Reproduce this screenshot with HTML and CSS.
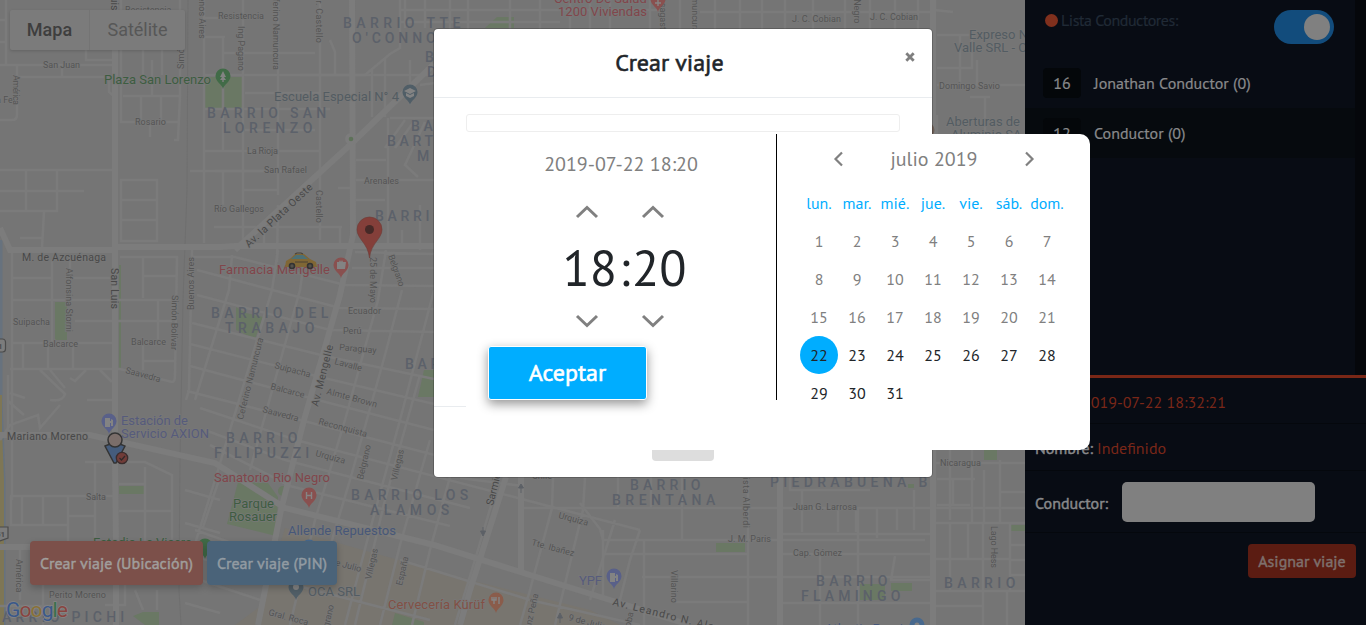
FILE: index.html
```html
<!DOCTYPE html>
<html lang="es">
<head>
<meta charset="utf-8">
<title>Crear viaje</title>
<link rel="stylesheet" href="styles.css">
</head>
<body>
<div class="app">
<main class="map">
<svg class="map-canvas" width="1025" height="625" viewBox="0 0 1025 625">
  <!-- commercial blocks and parks -->
  <path class="shop" d="M285 528L345 545L470 580L590 610L620 625L235 625L262 605Z"/>
  <g class="park">
    <path d="M205 77H242V108H205Z"/><path d="M55 302H67V340H55Z"/><path d="M119 265H121V368H119Z"/>
    <path d="M236 307L246 313L263 317L255 339L236 330Z"/><path d="M424 370H434V397H418Z"/><path d="M119 486H144V494H119Z"/>
    <path d="M238 482L268 483L278 497L276 536L227 524Z"/><circle cx="283" cy="491" r="5"/><path d="M280 501H286L283 509Z"/>
    <path d="M133 616L143 612H159V625H145Z"/><path d="M395 613L424 622V625H392Z"/><path d="M485 28L497 17H514V28Z"/>
    <path d="M716 543H745V552H716Z"/><path d="M984 450H997V460H984Z"/><path d="M1010 525H1025V531H1010Z"/><path d="M860 584H885V600H860Z"/><path d="M891 583H912V591H891Z"/><path d="M908 484H914V488H908Z"/>
  </g>
  <path class="river" d="M1 240V400L4 480V625"/><path class="route" d="M0 395V430L2 480V625"/>
  <path class="rail" d="M188 0L187 190L183 300L180 460L179 590L181 625"/>
  <!-- streets, left side -->
  <path class="road" d="M6 0V65M0 20H5M0 42H5M86 50V60H112M0 65H112M17 77H109V92L115 97M17 65V115Q17 120 12 120H0M62 65V77M121 0V122H178M123 96H180M141 97V122M161 97V122M152 60V95M143 50V75M162 50V75M180 0V95L178 140H174M150 122V137M0 170H115M26 170V210M57 170V211H0M0 191H84M121 180H157V241H121ZM121 200H157M121 220H157M44 212L42 248M20 238H42M204 0V243M204 18H220M204 37H225M204 75H435M204 109H330M204 151H320M190 171H290M12 250V500M12 278H52M70 278H110M52 260V345M12 300H178M75 321H172M70 260V300M12 343H115M23 343V368M48 343V368M73 343V368M10 369H120L172 382Q175 382 175 375L177 257H120M143 276H177M143 258V298M158 300V340M143 361H174M143 345V370M192 250L189 390L186 400M40 370L65 394Q63 402 50 400M50 370L65 388M70 378L75 381L86 370M100 370L112 382M87 400H115M8 375V430L20 440M10 393L25 398M8 401L24 415"/>
  <path class="road" d="M85 462H145L172 475V545M145 467V545M95 462V545M10 496H115M11 496V525H68M22 496V524M43 496V524M68 496V545M68 516H95M119 484H145M119 511H172M20 548V600M43 585V625M105 605H125V585M135 590L143 610M157 590V610M185 603L220 613M186 572L203 576M185 490L220 500M185 523L220 533M219 480L203 527M0 606H50M0 440L10 425L38 415L40 428L60 405"/>
  <!-- streets, upper centre -->
  <path class="road" d="M223 37V150M243 0V245M278 0V195M320 0V240M223 53H315M245 93H320M245 130H315M215 171H290M223 171V205M244 190H277M278 227H342M330 40L335 52V75M300 75H365L390 54L400 48V0M372 70V117M385 58V117M390 118H435M388 118V246M356 160H386M356 180H434M338 188H354M356 200H385M410 60V105M420 85L435 83M405 120L385 148M415 120L395 148M425 122L405 165L418 177M264 227V246M278 205L277 262M214 227H340V246M402 230V246M420 205V250M405 0V28M425 0V28M450 0V29M468 0V29M510 0V29M540 0V29M570 0V29M590 0V29M610 0V29M400 10H660M400 22H560M650 0V29M680 0V29M700 12H930M715 0V29M740 0V29M762 0V29M785 0V29M813 0V29M845 0V29M870 0V29M895 0V29M918 0V29"/>
  <!-- slanted grid -->
  <path class="road" d="M192 257H235L345 285L434 286M197 270L340 308L434 309M197 295L330 330L434 332M192 323L325 356L434 379M190 344L320 377L434 404M190 366L310 398L434 430M187 391L304 421L450 459M200 408L296 440L640 530M205 430L285 460L470 508M210 445L290 486L450 526M352 268H434M355 252L434 254M278 250L272 290L215 480L190 560M304 262L300 290L250 470M232 255L229 290L195 400M386 250L378 300L345 420L315 520L290 625M402 290L385 355L350 480L320 580M434 290L400 420L370 530L345 625M420 375L385 500L355 625M430 440L400 545L380 625M460 440L430 550L412 625M500 475L475 560L455 625M553 478L552 508L530 590L520 625M585 478L583 510L555 625M615 520L590 600M640 530L630 560L620 600M195 530L280 560M190 555L275 580L430 620M185 575L260 600M460 478L523 486M520 508H1025M400 560L530 600L640 625"/>
  <!-- streets, right -->
  <path class="road" d="M618 477V508M651 477V508M682 477V540M603 530V598M580 503L600 529L603 540M604 540H925M644 540V625M748 477V625M603 554H748M642 577H935M676 602H748M802 508V532M838 508V532M858 508V625M877 508V538M897 508V530M914 490V530M780 534H932M780 554H935M790 477V490H870M802 490V508M856 508V532M820 554V625M895 556L891 580H930M780 603H930M935 450V520M950 450V520M935 463H1025M937 479H975M953 480V504M937 505H970M972 450V522M984 470V522M1000 460V522M1000 492H1025M935 523H1025M950 524V590M968 524V558M983 524V590M1010 524V590M935 559H1010M1010 560H1025M1010 575H1025M935 591H1025M935 606H983M983 591V625M1007 591V625M1010 545H1025M935 0V10L953 12M937 35H972V68H937M960 35V82M977 60V86M937 85H1025M937 115V134M985 98V134M970 97H990"/>
  <path class="avenue" d="M115 0V460L116 545V625M0 228L10 250H115M118 247H220L235 246H434M434 64L350 145L235 250M352 0L353 235L340 295L304 420L281 510L258 625M0 435H90L215 463L285 508L434 545L610 600L690 625M0 547H35M780 477V625M933 0V625M521 477V570M506 477L470 590L460 625"/>
  <circle class="junction" cx="351" cy="139" r="6"/><circle class="park-dot" cx="351" cy="139" r="2.3"/>
  <!-- street names -->
  <g class="st">
    <text x="43" y="68" textLength="37">San Juan</text><text x="-4" y="103">a Fe</text><text transform="translate(13 75) rotate(90)" textLength="30">América</text><text x="135" y="125" textLength="31">Rosario</text><text transform="translate(184 69) rotate(-90)">Simón Bolívar</text><text transform="translate(199 -14) rotate(90)">Buenos Aires</text><text x="125" y="13">Resistencia</text><text x="218" y="19" textLength="46">Resistencia</text><text transform="translate(238 26) rotate(90)" textLength="45">Ing Pagano</text><text transform="translate(273 -12) rotate(90)" textLength="82">Ceferino Namuncura</text><text transform="translate(316 -6) rotate(90)" textLength="49">Dr. Castello</text><text x="247" y="154" textLength="31">La Rioja</text><text x="264" y="173" textLength="43">San Rafael</text><text x="364" y="184" textLength="35">Arenales</text><text x="214" y="212" textLength="50">Río Gallegos</text><text transform="translate(316 190) rotate(90)" textLength="33">Castello</text>
    <text x="13" y="325" textLength="37">Suipacha</text><text x="43" y="347" textLength="35">Balcarce</text><text x="131" y="345" textLength="35">Balcarce</text><text transform="translate(66 268) rotate(90)" textLength="64">Alfonsina Storni</text><text transform="translate(172 295) rotate(91)" textLength="55">Simón Bolívar</text><text transform="translate(194 310) rotate(-90)" textLength="53">Buenos Aires</text><text transform="translate(125 373) rotate(15)" textLength="36">Saavedra</text><text x="348" y="314" textLength="33">Ecuador</text><text x="343" y="334">Perú</text><text transform="translate(339 350) rotate(5)">Paraguay</text><text transform="translate(334 364) rotate(15)">Lavalle</text><text transform="translate(274 368) rotate(15)">Suipacha</text><text transform="translate(270 389) rotate(15)">Balcarce</text><text transform="translate(326 394) rotate(15)" textLength="52">Almte Brown</text><text transform="translate(262 412) rotate(15)">Saavedra</text><text transform="translate(243 420) rotate(-76)" textLength="84">Ceferino Namuncura</text><text transform="translate(370 257) rotate(90)" textLength="46">25 de Mayo</text><text transform="translate(388 256) rotate(70)" textLength="33">Belgrano</text>
    <text x="86" y="500" textLength="20">Salta</text><text transform="translate(16 559) rotate(90)">América</text><text x="49" y="598" textLength="57">Perito Moreno</text><text transform="translate(318 424) rotate(15)" textLength="50">Reconquista</text><text transform="translate(315 456) rotate(15)">Urquiza</text><text transform="translate(363 480) rotate(-77)">Belgrano</text><text transform="translate(397 481) rotate(-77)">Villegas</text><text transform="translate(371 580) rotate(-77)">Villegas</text><text transform="translate(402 586) rotate(-77)">España</text><text transform="translate(323 562) rotate(15)">9 de Julio</text><text transform="translate(268 615) rotate(15)" textLength="41">Gral. Roca</text><text transform="translate(326 640) rotate(-77)">Belgrano</text><text transform="translate(558 518) rotate(15)">Urquiza</text><text transform="translate(531 545) rotate(15)" textLength="44">Tte. Ibañez</text><text transform="translate(528 640) rotate(-77)">Saenz Peña</text><text transform="translate(671 570) rotate(90)" textLength="33">Villarino</text><text transform="translate(626 646) rotate(-77)">Córdoba</text><text x="532" y="479">Chile</text><text x="728" y="542" textLength="43">J. M. Paris</text><text x="793" y="510" textLength="64">Juan G. Larrosa</text><text x="793" y="556" textLength="49">Cap. Gómez</text><text x="940" y="466" textLength="41">Nicaragua</text><text transform="translate(743 457) rotate(90)" textLength="71">Bautista Alberdi</text><text transform="translate(991 526) rotate(90)" textLength="42">Lago Hess</text><text x="792" y="22" textLength="49">J. C. Cobian</text><text x="870" y="20" textLength="48">J. C. Cobian</text><text transform="translate(854 -16) rotate(90)">Río Negro</text><text transform="translate(660 -13) rotate(90)">Anasagasti</text><text transform="translate(692 -14) rotate(90)">Namuncura</text><text x="939" y="89" textLength="61">Domingo Savio</text><text transform="translate(568 620) rotate(15)">9 de Julio</text>
  </g>
  <g class="ave">
    <text transform="translate(111 -29) rotate(90)">San Luis</text><text x="22" y="261" textLength="84">M. de Azcuénaga</text><text transform="translate(111 268) rotate(90)" textLength="41">San Luis</text><text transform="translate(249 248) rotate(-43)" textLength="88">Av. la Plata Oeste</text><text transform="translate(318 407) rotate(-76)" textLength="63">Av. Mengelle</text><text x="7" y="440" textLength="81">Mariano Moreno</text><text transform="translate(493 506) rotate(-76)">Sarmiento</text><text transform="translate(612 605) rotate(14)" textLength="114">Av. Leandro N. Alem</text>
  </g>
  <g class="hood">
    <text x="207" y="118" textLength="123">BARRIO SAN</text><text x="223" y="133" textLength="93">LORENZO</text><text x="343" y="28" textLength="121">BARRIO TTE</text><text x="352" y="43" textLength="100">O'CONNOR</text><text x="425" y="62">BARRIO</text><text x="427" y="77">DON</text><text x="411" y="131">BARRIO</text><text x="387" y="146">BARTOLOME</text><text x="417" y="161">MITRE</text><text x="375" y="221">BARRIO</text><text x="211" y="318" textLength="121">BARRIO DEL</text><text x="225" y="333" textLength="93">TRABAJO</text><text x="405" y="369">BARRIO</text><text x="226" y="443" textLength="75">BARRIO</text><text x="214" y="458" textLength="99">FILIPUZZI</text><text x="351" y="500" textLength="121">BARRIO LOS</text><text x="370" y="515" textLength="83">ALAMOS</text><text x="630" y="490" textLength="74">BARRIO</text><text x="612" y="505" textLength="107">BRENTANA</text><text x="770" y="487" textLength="161">PIEDRABUENA B</text><text x="816" y="586" textLength="75">BARRIO</text><text x="801" y="601" textLength="103">FLAMINGO</text><text x="944" y="588" textLength="75">BARRIO</text><text x="2" y="622" textLength="126">ARRIO PICHI</text>
  </g>
  <!-- points of interest -->
  <g class="poi">
    <text class="green" x="104" y="84" textLength="107">Plaza San Lorenzo</text><text class="teal" x="274" y="101" textLength="125">Escuela Especial N° 4</text><text class="red" x="219" y="274" textLength="111">Farmacia Mengelle</text><text class="blue" x="121" y="425" textLength="67">Estación de</text><text class="blue" x="121" y="438" textLength="88">Servicio AXION</text><text class="red" x="214" y="482" textLength="116">Sanatorio Rio Negro</text><text class="green" x="233" y="508" textLength="41">Parque</text><text class="green" x="229" y="521" textLength="48">Rosauer</text><text class="sky" x="288" y="535" textLength="108">Allende Repuestos</text><text class="teal" x="308" y="596" textLength="52">OCA SRL</text><text class="orange" x="388" y="609" textLength="97">Cervecería Kürüf</text><text class="blue" x="579" y="585" textLength="23">YPF</text><text class="green" x="93" y="547" textLength="99">Estadio La Visera</text><text class="red" x="554" y="3">Centro De Salud</text><text class="red" x="558" y="16" textLength="89">1200 Viviendas</text><text class="teal" x="969" y="39">Expreso Norte</text><text class="teal" x="954" y="52">Valle SRL - Of.</text><text class="teal" x="946" y="126" textLength="74">Aberturas de</text><text class="teal" x="951" y="139">Aluminio SA</text><text class="sky" x="825" y="633">Atlantic Propi</text>
  </g>
  <defs><path id="pin" d="M0 12C-1 7-7.5 5-7.5-1A7.5 7.5 0 1 1 7.5-1C7.5 5 1 7 0 12Z"/></defs>
  <g><use href="#pin" class="pin-green" x="223" y="77"/><path class="glyph" d="M223 71L220 77H222L220 80H222.3V82H223.7V80H226L224 77H226Z"/></g>
  <g><use href="#pin" class="pin-teal" x="410" y="93"/><path class="glyph" d="M404 91L410 88L416 91L410 94ZM406 93L410 95L414 93V96L410 98L406 96Z"/></g>
  <g><use href="#pin" class="pin-red" x="341" y="266"/><path class="glyph" d="M337 262H339L340 260L341 262L342 260L343 262H346L345 269H337Z"/></g>
  <g><use href="#pin" class="pin-blue" x="109" y="422"/><path class="glyph" d="M105 418H110V421H111V419L113 420V426H111V423H110V427H105Z"/></g>
  <g><use href="#pin" class="pin-red" x="309" y="496"/><path class="glyph-line" d="M306.5 492V499M311.5 492V499M306.5 495.5H311.5"/></g>
  <g><use href="#pin" class="pin-teal" x="296" y="588"/><circle class="glyph" cx="296" cy="587" r="3"/></g>
  <g><use href="#pin" class="pin-orange" x="496" y="601"/><path class="glyph-line" d="M494 597V604M492 597V600H496V597M499 597V604"/></g>
  <g><use href="#pin" class="pin-blue" x="614" y="577"/><path class="glyph" d="M610 573H615V576H616V574L618 575V581H616V578H615V582H610Z"/></g>
  <g><use href="#pin" class="pin-red" x="658" y="0"/><path class="glyph-line" d="M658 -1V6M655 3H661"/></g>
  <g><use href="#pin" class="pin-green" x="205" y="547"/><use href="#pin" class="pin-sky" x="309" y="548"/><use href="#pin" class="pin-sky" x="917" y="626"/><circle class="glyph" cx="917" cy="625" r="2.5"/><circle class="pin-brown" cx="927" cy="130" r="7.5"/></g>
  <!-- one-way arrows -->
  <path class="arrow" d="M521 493V486M518.5 488L521 484L523.5 488ZM483 527V534M480.5 531L483 536L485.5 531ZM560 623V616M557.5 618L560 613L562.5 618Z"/>
  <!-- route shields -->
  <rect class="shield" x="-9" y="339" width="14.5" height="13" rx="3"/><text class="shield-text" x="-2" y="349">1</text><path class="shield" d="M-2 527H8V538L0 541H-5"/><text class="shield-text" x="-4" y="537">51</text>
  <!-- destination marker -->
  <path class="dest" d="M369.500 258C368 243 357 239 357 229.500A12.500 12.500 0 0 1 382 229.500C382 239 371 243 369.500 258Z"/><circle class="dest-dot" cx="369.500" cy="229.500" r="4.500"/>
  <!-- taxi -->
  <path class="taxi" d="M285 267L286 261L291 258L295 254H304L310 259L316 262L317 267Z"/><path class="taxi-glass" d="M291 259L296 255H303L308 259Z"/><path class="taxi-check" d="M295 254L297 253H301L303 254M295 262H308"/><circle class="wheel" cx="292" cy="266" r="2.500"/><circle class="wheel" cx="310" cy="266" r="2.500"/>
  <!-- passenger -->
  <path class="person" d="M105 446L110 444H120L125 446L116 463H114Z"/><circle class="head" cx="115" cy="440" r="7"/><circle class="check" cx="122" cy="458" r="5.700"/><path class="check-line" d="M119.500 458L121.500 460L125 456"/>
  <text class="google" x="6" y="617" textLength="62"><tspan class="g-blue">G</tspan><tspan class="g-red">o</tspan><tspan class="g-yellow">o</tspan><tspan class="g-blue">g</tspan><tspan class="g-green">l</tspan><tspan class="g-red">e</tspan></text>
</svg>
<div class="map-type"><span class="type on">Mapa</span><span class="type">Satélite</span></div>
<div class="map-actions"><button class="trip red-btn">Crear viaje (Ubicación)</button><button class="trip blue-btn">Crear viaje (PIN)</button></div>
</main>

<aside class="side">
  <section class="drivers">
    <header class="drivers-head"><i class="status"></i><span class="drivers-title">Lista Conductores:</span><span class="toggle"><i class="knob"></i></span></header>
    <div class="driver"><b class="unit">16</b><span>Jonathan Conductor (0)</span></div>
    <div class="driver alt"><b class="unit">12</b><span>Conductor (0)</span></div>
  </section>
  <section class="trip-info">
    <div class="info"><span class="label">Fecha:</span> <span class="value">2019-07-22 18:32:21</span></div>
    <div class="info name"><span class="label">Nombre:</span> <span class="value">Indefinido</span></div>
    <div class="info assign"><span class="label">Conductor:</span><span class="field"></span></div>
    <div class="assign-row"><button class="assign-btn">Asignar viaje</button></div>
  </section>
</aside>

<div class="modal">
  <header class="modal-head"><h1 class="title">Crear viaje</h1><svg class="close" width="10" height="10" viewBox="0 0 10 10"><path d="M1.300 1.300L8.700 8.700M8.700 1.300L1.300 8.700"/></svg></header>
  <div class="modal-body"><div class="search"></div></div>
  <div class="modal-foot"><span class="foot-btn"></span></div>
  <div class="picker">
    <div class="time-pane">
      <div class="stamp">2019-07-22 18:20</div>
      <div class="arrows"><svg width="24" height="14"><path d="M2 12L12 2.500L22 12"/></svg><svg width="24" height="14"><path d="M2 12L12 2.500L22 12"/></svg></div>
      <div class="clock"><span>18</span><span class="colon">:</span><span>20</span></div>
      <div class="arrows down"><svg width="24" height="14"><path d="M2 2L12 11.500L22 2"/></svg><svg width="24" height="14"><path d="M2 2L12 11.500L22 2"/></svg></div>
      <button class="accept">Aceptar</button>
    </div>
    <div class="date-pane">
      <div class="month"><svg width="11" height="16"><path d="M9 1.500L2.500 8L9 14.500"/></svg><span class="month-name">julio 2019</span><svg width="11" height="16"><path d="M2 1.500L8.500 8L2 14.500"/></svg></div>
      <div class="days">
        <span class="wd">lun.</span><span class="wd">mar.</span><span class="wd">mié.</span><span class="wd">jue.</span><span class="wd">vie.</span><span class="wd">sáb.</span><span class="wd">dom.</span>
        <span class="past">1</span><span class="past">2</span><span class="past">3</span><span class="past">4</span><span class="past">5</span><span class="past">6</span><span class="past">7</span>
        <span class="past">8</span><span class="past">9</span><span class="past">10</span><span class="past">11</span><span class="past">12</span><span class="past">13</span><span class="past">14</span>
        <span class="past">15</span><span class="past">16</span><span class="past">17</span><span class="past">18</span><span class="past">19</span><span class="past">20</span><span class="past">21</span>
        <span class="today">22</span><span>23</span><span>24</span><span>25</span><span>26</span><span>27</span><span>28</span>
        <span>29</span><span>30</span><span>31</span>
      </div>
    </div>
  </div>
</div>
</div>
</body>
</html>
```
FILE: styles.css
```css
*{box-sizing:border-box}
body{margin:0;overflow:hidden;background:#080c14;font-family:"PT Sans",Lato,"Noto Sans",sans-serif;font-size:16px;color:#212529}
button{font:inherit;border:0;padding:0}
.app{position:relative;display:flex;width:1366px;height:625px;overflow:hidden}
/* map */
.map{position:relative;width:1025px;height:625px;background:#757575;overflow:hidden}
.map-canvas{display:block;font-family:Roboto,sans-serif}
.shop{fill:#78756f}
.park{fill:#6a7864}
.park-dot{fill:#5e7259}
.river{fill:none;stroke:#67727e;stroke-width:3}
.route{fill:none;stroke:#7e7655;stroke-width:4}
.rail{fill:none;stroke:#6f6f6f;stroke-width:1}
.road{fill:none;stroke:#7b7b7b;stroke-width:2.6}
.avenue{fill:none;stroke:#7c7c7c;stroke-width:6}
.junction{fill:#7c7c7c}
.st{font-size:9px;fill:#545454}
.ave{font-size:10.5px;fill:#484848}
.hood{font-size:14px;font-weight:500;letter-spacing:3.7px;fill:#5c616a}
.poi{font-size:13px}
.st,.ave,.poi{paint-order:stroke;stroke:#787878;stroke-width:1.5px}
.green{fill:#3d5d41}.teal{fill:#535c62}.red{fill:#81464b}.blue{fill:#565b7c}.sky{fill:#475779}.orange{fill:#835044}
.pin-green{fill:#416b47}.pin-teal{fill:#505e67}.pin-red{fill:#89504f}.pin-blue{fill:#596089}.pin-orange{fill:#8a5c4b}.pin-sky{fill:#48698e}
.pin-brown{fill:#6b5d55}
.glyph{fill:#838383}
.glyph-line{fill:none;stroke:#858585;stroke-width:1.4}
.arrow{fill:#5d6167;stroke:#5d6167;stroke-width:1}
.shield{fill:#7c7c7c;stroke:#4b4b4b;stroke-width:1.2}
.shield-text{font-size:8px;font-weight:700;fill:#4b4b4b}
.dest{fill:#843f3a;stroke:#6d3a35;stroke-width:.6}
.dest-dot{fill:#462927}
.taxi{fill:#806735}.taxi-glass{fill:#4c7076}.taxi-check{fill:none;stroke:#4a4235;stroke-width:1.2}
.wheel{fill:#55524b;stroke:#333;stroke-width:1.6}
.person{fill:#455c7c;stroke:#343434;stroke-width:1.4}
.head{fill:#7b6e6a;stroke:#343434;stroke-width:1.5}
.check{fill:#713c38;stroke:#3a2d2d;stroke-width:1.3}
.check-line{fill:none;stroke:#2f2929;stroke-width:1.2}
.google{font-size:21px;stroke:#858585;stroke-width:1.5px;paint-order:stroke}
.g-blue{fill:#3a588a}.g-red{fill:#89443f}.g-yellow{fill:#8a7135}.g-green{fill:#39704a}
.map-type{position:absolute;left:10px;top:10px;display:flex;height:40px;background:#7b7b7b;border-radius:2px;box-shadow:0 1px 3px rgba(0,0,0,.16);font:18px/40px Roboto,sans-serif}
.type{width:95px;text-align:center;color:#575757}
.type.on{width:80px;border-right:1px solid #747474;color:#3e3e3e;font-weight:500}
.map-actions{position:absolute;left:30px;top:541px;display:flex;gap:4px}
/* medium weight drawn from the regular cut */
.trip,.label,.assign-btn{font-weight:400;font-size:16px;-webkit-text-stroke:.45px currentColor}
.title,.accept{font-weight:400;font-size:24px;-webkit-text-stroke:.6px currentColor}
.trip{height:44px;border-radius:4px;color:#a09e9c;box-shadow:0 3px 7px rgba(0,0,0,.22)}
.red-btn{width:173px;background:#7c504a}
.blue-btn{width:130px;background:#4a6379;color:#929ba2}
/* side panel */
.side{width:341px;background:#080c14;color:#88898b}
.drivers{height:375px;border-right:11px solid #05070b}
.drivers-head{display:flex;align-items:flex-start;height:58px;padding:10px 21px 0 20px;margin-right:-11px;padding-right:32px;color:#202a36}
.status{width:13px;height:13px;margin-top:4px;border-radius:50%;background:#80301d}
.drivers-title{flex:1;padding-left:3px;line-height:20px;letter-spacing:-.45px;-webkit-text-stroke:.2px currentColor}
.toggle{display:flex;width:60px;height:34px;padding:4px;border-radius:17px;background:#124c7c;justify-content:flex-end}
.knob{width:26px;height:26px;border-radius:50%;background:#808080}
.driver{display:flex;align-items:center;gap:13px;height:50px;padding-left:18px;-webkit-text-stroke:.2px currentColor}
.driver.alt{background:#060a0e}
.unit{width:38px;height:30px;border-radius:4px;background:#04070a;text-align:center;line-height:30px;font-weight:400}
.trip-info{border-top:3px solid #7a2716}
.info{display:flex;align-items:center;height:46px;padding:2px 10px 0;gap:4px;border-bottom:1px solid #05080d}
.info:first-child .label{width:43px}
.info.name{height:47px;padding-top:2px}
.info.assign{height:62px;gap:13px;padding-top:1px}
.assign .label{width:74px;padding-top:2px;white-space:nowrap}
.value{color:#7a2718}
.field{width:193px;height:40px;border-radius:5px;background:#808080}
.assign-row{display:flex;justify-content:flex-end;padding:11px 10px 0}
.assign-btn{width:108px;height:34px;border-radius:4px;background:#5b1c12;color:#7e706d}
/* dialog */
.modal{position:absolute;left:434px;top:29px;width:498px;height:448px;border-radius:4px;background:#fff;box-shadow:0 0 0 1px rgba(0,0,0,.2)}
.modal-head{display:flex;align-items:center;height:69px;padding:0 17px 0 0;border-bottom:1px solid #e9ecef}
.title{flex:1;margin:0;text-align:center;line-height:30px;color:#212529}
.close{margin-top:-13px;fill:none;stroke:#7f7f7f;stroke-width:2.8}
.modal-body{height:309px;padding:16px 32px;border-bottom:1px solid #e9ecef}
.search{height:18px;border:1px solid #eee;border-radius:3px}
.modal-foot{padding:43px 0 0 218px}
.foot-btn{display:block;width:62px;height:11px;border-radius:0 0 4px 4px;background:#ddd}
.picker{position:absolute;left:32px;top:105px;display:flex;width:624px;height:316px;border-radius:10px;background:#fff}
.time-pane{display:flex;flex-direction:column;width:311px;height:266px;border-right:1px solid #000}
.stamp{padding:18px 0 0;text-align:center;font-size:20px;line-height:24px;color:#808080}
.arrows{display:flex;gap:42px;padding:29px 0 0 109px}
.arrows svg,.month svg{display:block;fill:none;stroke:#808080;stroke-width:3}
.clock{display:flex;justify-content:center;padding-left:7px;margin-top:13px;height:72px;font-size:50px;line-height:72px;color:#212529}
.colon{padding:0 2px}
.arrows.down{padding-top:10px}
.accept{width:159px;height:54px;margin:18px 0 0 22px;flex:none;border:1px solid #fff;border-radius:3px;background:#00adff;color:#fff;line-height:50px;box-shadow:0 4px 11px rgba(0,0,0,.42)}
.date-pane{width:312px;padding:16px 23px}
.month{display:flex;justify-content:space-between;width:202px;height:17px;margin:0 0 0 33px;align-items:center;color:#808080;font-size:20px}
.month svg{stroke-width:2.2}
.month-name{line-height:20px}
.days{display:grid;grid-template-columns:repeat(7,38px);grid-auto-rows:38px;margin-top:17px;text-align:center;line-height:38px;font-size:16px}
.wd{color:#00adff}
.past{color:#808080}
.today{border-radius:50%;background:#00adff}
```
